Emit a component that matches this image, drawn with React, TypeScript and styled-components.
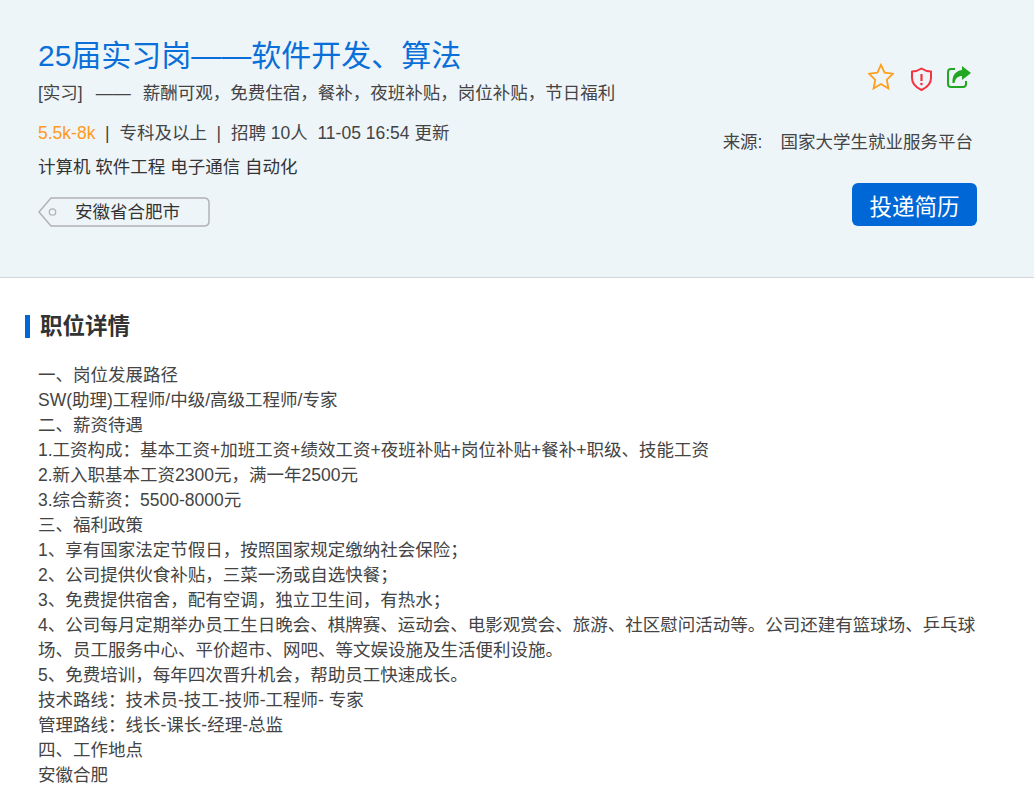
import React from "react";
import styled, { createGlobalStyle } from "styled-components";

const Global = createGlobalStyle`
  html, body { margin: 0; padding: 0; background: #fff; }
  body { font-family: "Liberation Sans", "Noto Sans CJK SC", sans-serif; color: #333; }
`;
const Page = styled.div`width: 1034px; height: 811px; overflow: hidden; background: #fff;`;
const Header = styled.header`
  background: #eef5f9; border-bottom: 1px solid #d3d6d9;
  display: flex; justify-content: space-between; padding: 37px 57px 0 38px; box-sizing: content-box; width: 939px;
  height: 240px;
`;
const Left = styled.div`display: flex; flex-direction: column; align-items: flex-start;`;
const Title = styled.h1`margin: 0; font-size: 30px; line-height: 38px; font-weight: 400; color: #0a6fd8;`;
const Sub = styled.div`margin-top: 4px; font-size: 17.5px; line-height: 28px; color: #444; white-space: pre;`;
const Gap = styled.span`margin: 0 12px 0 13px;`;
const Meta = styled.div`margin-top: 13px; font-size: 17.5px; line-height: 26px; color: #444; white-space: pre;`;
const Salary = styled.span`color: #ff9a1f;`;
const Majors = styled.div`margin-top: 8px; font-size: 17.5px; line-height: 26px; color: #333;`;
const Tag = styled.div`
  margin-top: 17px; position: relative; width: 172px; height: 30px;
  display: flex; align-items: center; padding: 0 0 3px 37px; box-sizing: border-box; font-size: 17.5px; color: #333;
`;
const TagShape = styled.svg`position: absolute; left: 0; top: 0;`;
const TagText = styled.span`position: relative;`;
const Right = styled.div`display: flex; flex-direction: column; align-items: flex-end; padding-top: 26px;`;
const Icons = styled.div`display: flex; align-items: flex-start; gap: 15px; margin-right: 5px;`;
const Source = styled.div`margin-top: 38px; font-size: 17.5px; line-height: 26px; color: #444; white-space: pre; margin-right: 4px;`;
const SourceLabel = styled.span`margin-right: 18px;`;
const Apply = styled.button`
  margin-top: 28px; width: 125px; height: 43px; border: 0; border-radius: 6px; background: #0068d6; color: #fff;
  font: 400 22.5px "Liberation Sans", "Noto Sans CJK SC", sans-serif; padding: 0;
`;
const Section = styled.section`padding: 37px 40px 0 25px;`;
const Heading = styled.h2`
  margin: 0; border-left: 5px solid #0068d6; padding-left: 10px; height: 23px; line-height: 23px;
  font-size: 22.5px; font-weight: 700; color: #333;
`;
const Body = styled.div`margin-top: 25px; padding-left: 13px; font-size: 17.5px; line-height: 25px; color: #444;`;

const lines = [
  "一、岗位发展路径",
  "SW(助理)工程师/中级/高级工程师/专家",
  "二、薪资待遇",
  "1.工资构成：基本工资+加班工资+绩效工资+夜班补贴+岗位补贴+餐补+职级、技能工资",
  "2.新入职基本工资2300元，满一年2500元",
  "3.综合薪资：5500-8000元",
  "三、福利政策",
  "1、享有国家法定节假日，按照国家规定缴纳社会保险；",
  "2、公司提供伙食补贴，三菜一汤或自选快餐；",
  "3、免费提供宿舍，配有空调，独立卫生间，有热水；",
  "4、公司每月定期举办员工生日晚会、棋牌赛、运动会、电影观赏会、旅游、社区慰问活动等。公司还建有篮球场、乒乓球场、员工服务中心、平价超市、网吧、等文娱设施及生活便利设施。",
  "5、免费培训，每年四次晋升机会，帮助员工快速成长。",
  "技术路线：技术员-技工-技师-工程师- 专家",
  "管理路线：线长-课长-经理-总监",
  "四、工作地点",
  "安徽合肥",
];

export default function App() {
  return (
    <Page>
      <Global />
      <Header>
        <Left>
          <Title>25届实习岗——软件开发、算法</Title>
          <Sub>[实习]<Gap>——</Gap>薪酬可观，免费住宿，餐补，夜班补贴，岗位补贴，节日福利</Sub>
          <Meta><Salary>5.5k-8k</Salary>  |  专科及以上  |  招聘 10人  11-05 16:54 更新</Meta>
          <Majors>计算机 软件工程 电子通信 自动化</Majors>
          <Tag>
            <TagShape width="172" height="30" viewBox="0 0 172 30">
              <path d="M1 15 L13 1 H166 Q171 1 171 6 V24 Q171 29 166 29 H13 Z" fill="#eef5f9" stroke="#b1b3b5" strokeWidth="1.5" />
              <circle cx="14.5" cy="15" r="3.2" fill="none" stroke="#b1b3b5" strokeWidth="1.3" />
            </TagShape>
            <TagText>安徽省合肥市</TagText>
          </Tag>
        </Left>
        <Right>
          <Icons>
            <svg width="26" height="28" viewBox="0 0 26 28" fill="none">
              <path d="M13 1.8 L16.6 9.6 L25 10.7 L18.8 16.7 L20.4 25.5 L13 21 L5.6 25.5 L7.2 16.7 L1 10.7 L9.4 9.6 Z" stroke="#ff9f1c" strokeWidth="1.8" />
            </svg>
            <svg width="23" height="28" viewBox="0 0 23 28" fill="none">
              <path d="M12.5 5.5 C15.5 7.5 18.5 8.5 22 8.5 V15 C22 20.5 18 24.5 12.5 27 C7 24.5 3 20.5 3 15 V8.5 C6.5 8.5 9.5 7.5 12.5 5.5 Z" stroke="#f5333f" strokeWidth="2" strokeLinejoin="round" />
              <path d="M12.5 11 V18" stroke="#f5333f" strokeWidth="2.2" />
              <circle cx="12.5" cy="21" r="1.3" fill="#f5333f" />
            </svg>
            <svg width="25" height="28" viewBox="0 0 25 28" fill="none">
              <path d="M8 6 H4 Q1 6 1 9 V21 Q1 24 4 24 H16 Q19 24 19 21 V18" stroke="#22a722" strokeWidth="2" />
              <path d="M15 3 L24 10 L15 17 V13 C11 13 8.5 15 7.5 20 L5.5 20 C5 13 8 8 15 7 Z" fill="#22a722" />
            </svg>
          </Icons>
          <Source><SourceLabel>来源:</SourceLabel>国家大学生就业服务平台</Source>
          <Apply>投递简历</Apply>
        </Right>
      </Header>
      <Section>
        <Heading>职位详情</Heading>
        <Body>{lines.map((l) => <div key={l}>{l}</div>)}</Body>
      </Section>
    </Page>
  );
}
